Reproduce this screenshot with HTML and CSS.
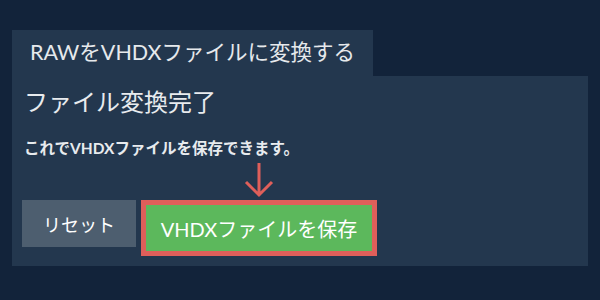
FILE: index.html
```html
<!DOCTYPE html>
<html lang="ja">
<head>
<meta charset="utf-8">
<link rel="stylesheet" href="styles.css">
</head>
<body>
<div class="page">
  <div class="tab">RAWをVHDXファイルに変換する</div>
  <div class="panel">
    <h1 class="title">ファイル変換完了</h1>
    <p class="desc">これでVHDXファイルを保存できます。</p>
    <div class="actions">
      <button class="btn reset">リセット</button>
      <div class="save-wrap">
        <svg class="arrow" width="30" height="36" viewBox="0 0 30 36">
          <path d="M15 1 V33 M2 20 L15 33 L28 20" fill="none" stroke="#df5f5a" stroke-width="3"/>
        </svg>
        <button class="btn save">VHDXファイルを保存</button>
      </div>
    </div>
  </div>
</div>
</body>
</html>
```
FILE: styles.css
```css
html, body {
  margin: 0;
  padding: 0;
  background: #12233a;
}
body {
  font-family: "Lato", "Noto Sans CJK JP", sans-serif;
  color: #e8ebee;
}
.page {
  padding: 30px 12px 0 12px;
}
.tab {
  display: inline-block;
  background: #23374e;
  padding: 0 18px;
  height: 46px;
  line-height: 44px;
  font-size: 21.5px;
  color: #e6e9ec;
}
.panel {
  background: #23374e;
  padding: 10px 10px 10px 10px;
  height: 170px;
}
.title {
  margin: 0;
  font-size: 24px;
  font-weight: normal;
  line-height: 32px;
  padding-left: 2px;
}
.desc {
  margin: 20px 0 0 0;
  font-size: 15.5px;
  font-weight: bold;
  line-height: 20px;
  padding-left: 2px;
}
.actions {
  display: flex;
  align-items: flex-start;
  gap: 5px;
  margin-top: 42px;
}
.btn {
  font-family: "Lato", "Noto Sans CJK JP", sans-serif;
  font-weight: normal;
  border: none;
  color: #ffffff;
  font-size: 18px;
  height: 47px;
  padding: 0;
}
.reset {
  width: 114px;
  background: #4d5e6f;
}
.save-wrap {
  position: relative;
}
.save {
  width: 236px;
  height: 56px;
  font-size: 20px;
  background: #5cb85c;
  border: 5px solid #df5f5a;
}
.arrow {
  position: absolute;
  left: 103px;
  top: -38px;
}
```
